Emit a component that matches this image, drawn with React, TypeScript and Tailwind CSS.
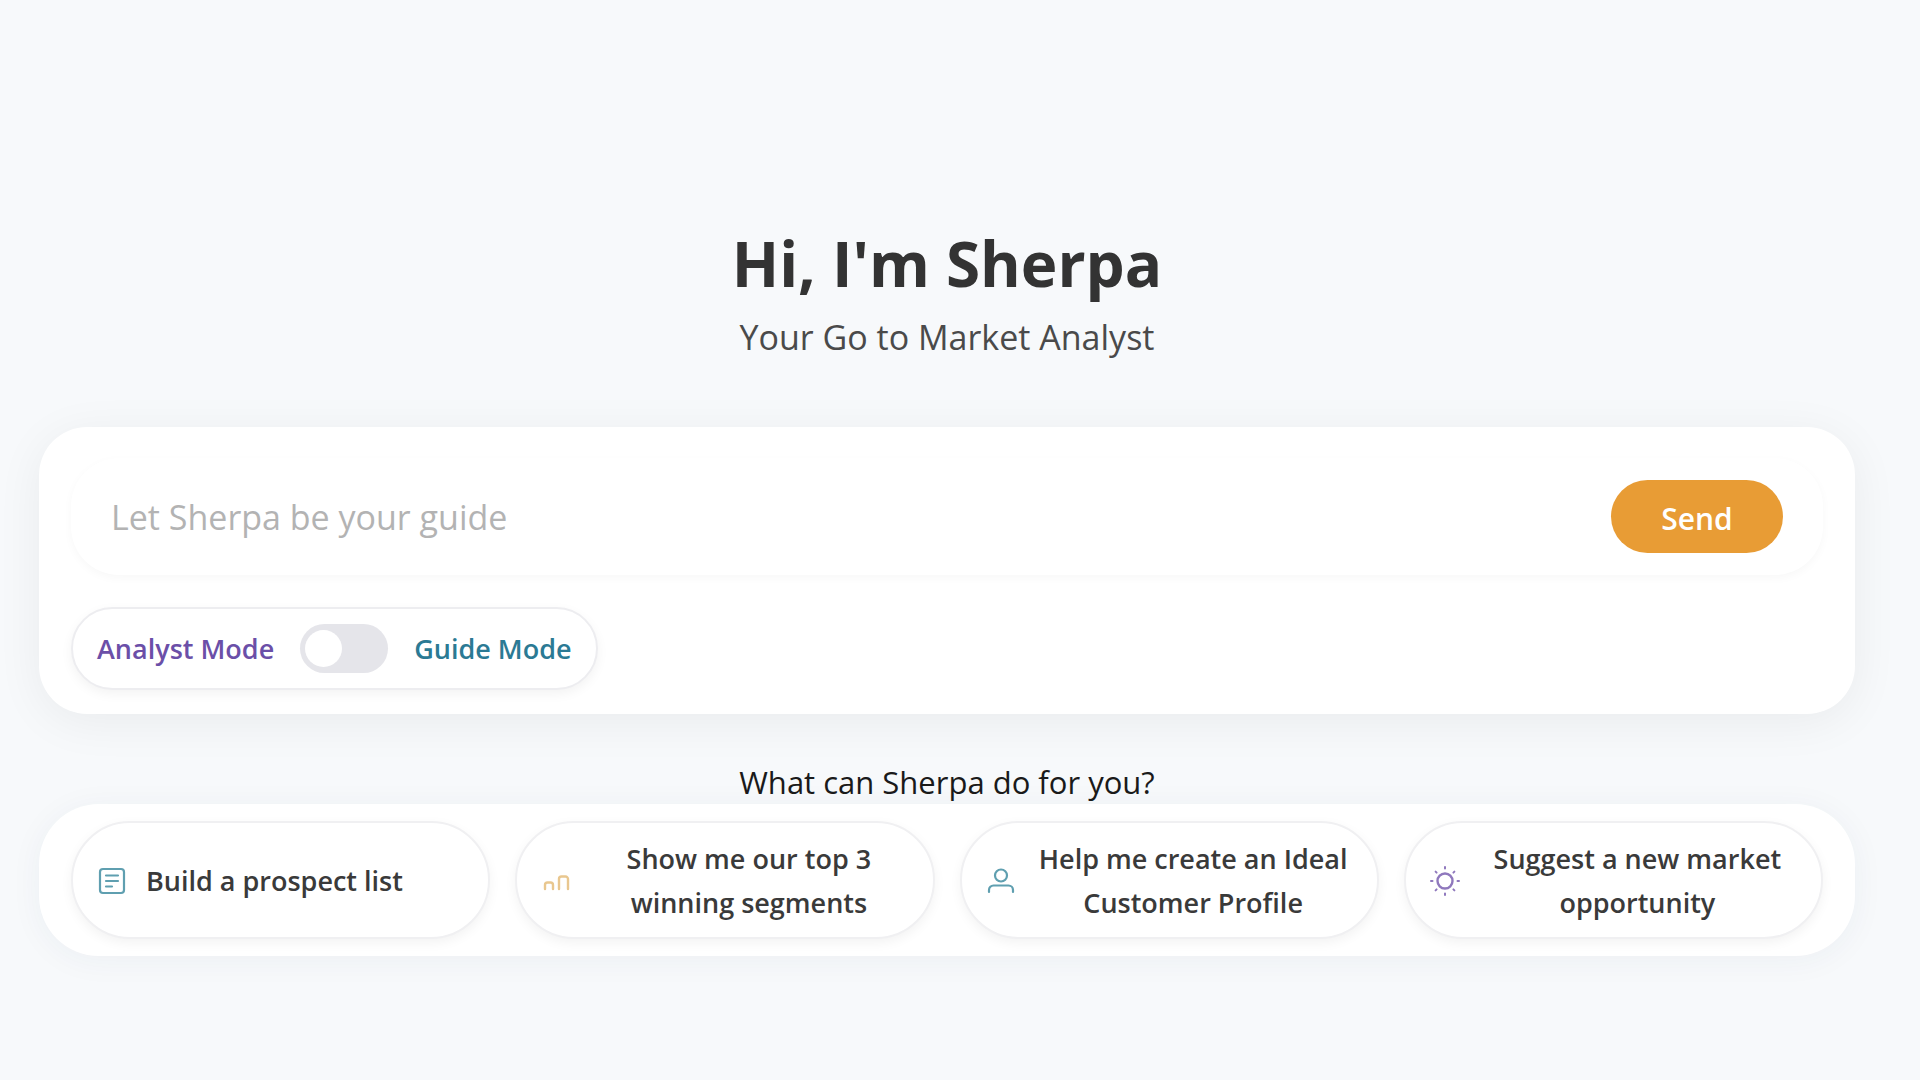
import React, { useState } from "react";

interface PropsSuggestion {
  icon: React.ReactNode;
  label: string;
}

function ListIcon() {
  return (
    <svg width="28" height="28" viewBox="0 0 28 28" fill="none" stroke="#5f9fb0" strokeWidth="2.200" strokeLinecap="round">
      <rect x="2" y="2" width="24" height="24" rx="3" />
      <path d="M8 8.500h12M8 14h12M8 19.500h6" />
    </svg>
  );
}

function BarsIcon() {
  return (
    <svg width="28" height="28" viewBox="0 0 28 28" fill="none" stroke="#e9c78f" strokeWidth="2.400" strokeLinecap="round">
      <path d="M3 22v-4a2.500 2.500 0 0 1 2.500-2.500h3A2.500 2.500 0 0 1 11 18v4" />
      <path d="M17 22V12a2.500 2.500 0 0 1 2.500-2.500h4A2.500 2.500 0 0 1 26 12v10" />
    </svg>
  );
}

function PersonIcon() {
  return (
    <svg width="28" height="28" viewBox="0 0 28 28" fill="none" stroke="#5f9fb0" strokeWidth="2.200" strokeLinecap="round">
      <circle cx="14" cy="8.500" r="6" />
      <path d="M2 25v-2a4.500 4.500 0 0 1 4.500-4.500h15A4.500 4.500 0 0 1 26 23v2" />
    </svg>
  );
}

function SunIcon() {
  return (
    <svg width="28" height="28" viewBox="0 0 28 28" fill="none" stroke="#8f78bd" strokeWidth="2" strokeLinecap="round" className="overflow-visible">
      <circle cx="14" cy="14" r="7.500" strokeWidth="2.400" />
      <path d="M14 0v1.500M14 26.500v1.500M0 14h1.500M26.500 14h1.500M4.600 4.600l1 1M22.400 22.400l1 1M4.600 23.400l1-1M22.400 5.600l1-1" />
    </svg>
  );
}

const suggestions: PropsSuggestion[] = [
  { icon: <ListIcon />, label: "Build a prospect list" },
  { icon: <BarsIcon />, label: "Show me our top 3 winning segments" },
  { icon: <PersonIcon />, label: "Help me create an Ideal Customer Profile" },
  { icon: <SunIcon />, label: "Suggest a new market opportunity" },
];

function SuggestionButton(props: PropsSuggestion) {
  return (
    <button
      type="button"
      className="flex min-h-[118px] items-center gap-5 rounded-full border-2 border-[#f0f0f2] bg-white px-[25px] pt-[2px] shadow-[0_4px_12px_rgba(0,0,0,0.05)]"
    >
      <span className="shrink-0">{props.icon}</span>
      <span className="text-center text-[27px] leading-[44px] font-semibold text-[#3a3a3a]">
        {props.label}
      </span>
    </button>
  );
}

export default function App() {
  const [message, setMessage] = useState("");
  const [guideMode, setGuideMode] = useState(false);

  return (
    <main className="min-h-screen bg-[#f7f9fb] pt-[219px] pr-[65px] pb-[125px] pl-[39px] font-['Segoe_UI','Open_Sans',sans-serif]">
      <header className="text-center">
        <h1 className="text-[62px] leading-[88px] font-bold text-[#333333]">Hi, I'm Sherpa</h1>
        <p className="text-[34px] leading-[60px] text-[#4a4a4a]">Your Go to Market Analyst</p>
      </header>

      <section className="mt-[60px] rounded-[48px] bg-white px-8 pt-[31px] pb-6 shadow-[0_8px_48px_rgba(0,0,0,0.06)]">
        <form
          className="flex min-h-[117px] items-center rounded-[48px] bg-white px-10 shadow-[0_3px_10px_rgba(0,0,0,0.03)]"
          onSubmit={(e) => e.preventDefault()}
        >
          <input
            type="text"
            aria-label="Message"
            placeholder="Let Sherpa be your guide"
            value={message}
            onChange={(e) => setMessage(e.target.value)}
            className="min-w-0 flex-1 bg-transparent text-[34px] leading-[48px] text-[#333333] outline-none placeholder:text-[#b3b3b3]"
          />
          <button
            type="submit"
            className="h-[73px] w-[172px] rounded-full bg-[#e89c35] pt-1 text-[30px] font-semibold text-white"
          >
            Send
          </button>
        </form>

        <label className="mt-8 inline-flex h-[83px] items-center gap-[26px] rounded-full border-2 border-[#ededf0] bg-white px-6 align-top text-[27px] font-semibold shadow-[0_4px_12px_rgba(0,0,0,0.05)]">
          <span className="pt-[2px] text-[#6b4fa8]">Analyst Mode</span>
          <input
            type="checkbox"
            checked={guideMode}
            onChange={(e) => setGuideMode(e.target.checked)}
            className="peer sr-only"
          />
          <span className="flex h-[49px] w-[88px] items-center rounded-full bg-[#e5e5ea] px-[5px] peer-checked:justify-end">
            <span className="size-[37px] rounded-full bg-white" />
          </span>
          <span className="pt-[2px] text-[#2b7a94]">Guide Mode</span>
        </label>
      </section>

      <h2 className="mt-[46px] text-center text-[31px] leading-[44px] text-[#1a1a1a]">
        What can Sherpa do for you?
      </h2>

      <section className="grid grid-cols-4 gap-[25px] rounded-[60px] bg-white px-8 py-[17px] shadow-[0_4px_32px_rgba(30,60,90,0.05)]">
        {suggestions.map((item) => (
          <SuggestionButton key={item.label} icon={item.icon} label={item.label} />
        ))}
      </section>
    </main>
  );
}
